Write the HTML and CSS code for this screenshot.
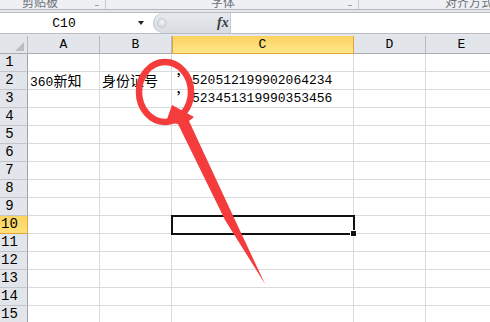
FILE: index.html
```html
<!DOCTYPE html>
<html>
<head>
<meta charset="utf-8">
<title>身份证号</title>
<link rel="stylesheet" href="styles.css">
</head>
<body>
<div class="ribbon">
	<div class="group g1"><span class="glabel">剪贴板</span><span class="launcher"></span></div>
	<div class="group g2"><span class="glabel">字体</span><span class="launcher"></span></div>
	<div class="group g3"><span class="glabel">对齐方式</span></div>
</div>
<div class="gap"></div>
<div class="formulaBar">
	<div class="nameBox"><span class="name">C10</span><span class="drop"></span></div>
	<div class="fxArea"><span class="knob"></span><span class="fx">fx</span></div>
	<div class="formulaInput"></div>
</div>
<div class="gap"></div>
<div class="sheet">
	<div class="row head"><div class="hd corner"></div><div class="hd">A</div><div class="hd">B</div><div class="hd active">C</div><div class="hd">D</div><div class="hd">E</div></div>
	<div class="row"><div class="rh">1</div><div class="c"></div><div class="c"></div><div class="c"></div><div class="c"></div><div class="c"></div></div>
	<div class="row"><div class="rh">2</div><div class="c">360<span class="cjk">新知</span></div><div class="c"><span class="cjk">身份证号</span></div><div class="c"><span class="quote">’</span>520512199902064234</div><div class="c"></div><div class="c"></div></div>
	<div class="row"><div class="rh">3</div><div class="c"></div><div class="c"></div><div class="c"><span class="quote">’</span>523451319990353456</div><div class="c"></div><div class="c"></div></div>
	<div class="row"><div class="rh">4</div><div class="c"></div><div class="c"></div><div class="c"></div><div class="c"></div><div class="c"></div></div>
	<div class="row"><div class="rh">5</div><div class="c"></div><div class="c"></div><div class="c"></div><div class="c"></div><div class="c"></div></div>
	<div class="row"><div class="rh">6</div><div class="c"></div><div class="c"></div><div class="c"></div><div class="c"></div><div class="c"></div></div>
	<div class="row"><div class="rh">7</div><div class="c"></div><div class="c"></div><div class="c"></div><div class="c"></div><div class="c"></div></div>
	<div class="row"><div class="rh">8</div><div class="c"></div><div class="c"></div><div class="c"></div><div class="c"></div><div class="c"></div></div>
	<div class="row"><div class="rh">9</div><div class="c"></div><div class="c"></div><div class="c"></div><div class="c"></div><div class="c"></div></div>
	<div class="row"><div class="rh active">10</div><div class="c"></div><div class="c"></div><div class="c selected"></div><div class="c"></div><div class="c"></div></div>
	<div class="row"><div class="rh">11</div><div class="c"></div><div class="c"></div><div class="c"></div><div class="c"></div><div class="c"></div></div>
	<div class="row"><div class="rh">12</div><div class="c"></div><div class="c"></div><div class="c"></div><div class="c"></div><div class="c"></div></div>
	<div class="row"><div class="rh">13</div><div class="c"></div><div class="c"></div><div class="c"></div><div class="c"></div><div class="c"></div></div>
	<div class="row"><div class="rh">14</div><div class="c"></div><div class="c"></div><div class="c"></div><div class="c"></div><div class="c"></div></div>
	<div class="row"><div class="rh">15</div><div class="c"></div><div class="c"></div><div class="c"></div><div class="c"></div><div class="c"></div></div>
</div>
<svg class="mark" width="490" height="322" viewBox="0 0 490 322">
	<ellipse cx="165" cy="92" rx="26" ry="30" fill="none" stroke="#f43c3c" stroke-width="6.5"/>
	<path d="M172 105 L194 117 L189 121 L235 220 L265 284 L225 220 L178 124 L166 122 Z" fill="#f43c3c"/>
</svg>
</body>
</html>
```
FILE: styles.css
```css
html, body{
	margin: 0;
	padding: 0;
	overflow: hidden;
	background: #ffffff;
}
body{
	width: 490px;
	height: 322px;
	font-family: "Liberation Mono", "Noto Sans CJK SC", monospace;
	position: relative;
}
.ribbon{
	display: flex;
	height: 9px;
	overflow: hidden;
	background: #eef0f3;
	border-bottom: 1px solid #b4b8be;
}
.group{
	position: relative;
	display: flex;
	align-items: flex-end;
	border-right: 1px solid #c6cad0;
}
.g1{ width: 105px; }
.g2{ width: 252px; }
.g3{ flex: 1; border-right: none; }
.glabel{
	font-family: "Noto Sans CJK SC", sans-serif;
	font-size: 12px;
	line-height: 16px;
	height: 16px;
	margin-bottom: -1px;
	color: #6d7077;
	flex-shrink: 0;
}
.g1 .glabel{ margin-left: 22px; }
.g2 .glabel{ margin-left: 105px; }
.g3 .glabel{ margin-left: 86px; }
.launcher{
	position: absolute;
	right: 6px;
	bottom: 3px;
	width: 4px;
	height: 1px;
	background: #9a9ea5;
}
.gap{
	height: 2px;
	background: #e4e7eb;
}
.formulaBar{
	display: flex;
	height: 20px;
	border-top: 1px solid #b9bdc3;
	border-bottom: 1px solid #b9bdc3;
	background: #ffffff;
}
.nameBox{
	width: 153px;
	display: flex;
	align-items: center;
}
.name{
	width: 128px;
	text-align: center;
	font-size: 13px;
	color: #000;
}
.drop{
	margin-left: 10px;
	width: 0;
	height: 0;
	border-left: 3px solid transparent;
	border-right: 3px solid transparent;
	border-top: 4px solid #222;
}
.fxArea{
	width: 77px;
	display: flex;
	align-items: center;
	background: linear-gradient(#e6e9ed, #d9dde2);
	border-radius: 10px 0 0 10px;
	box-shadow: inset 1px 0 0 #c3c7cd;
}
.knob{
	margin-left: 4px;
	width: 8px;
	height: 8px;
	border-radius: 50%;
	background: radial-gradient(circle at 50% 40%, #f4f5f7, #c9cdd3);
	border: 1px solid #c8ccd2;
}
.fx{
	margin-left: 50px;
	font-family: "Liberation Serif", serif;
	font-style: italic;
	font-weight: bold;
	font-size: 14px;
	color: #3a3d42;
}
.formulaInput{
	flex: 1;
	border-left: 1px solid #c6cad0;
}
.sheet{
	display: flex;
	flex-direction: column;
}
.row{
	display: grid;
	grid-template-columns: 28px 72px 72px 182px 72px 72px;
	height: 18px;
}
.row > div{
	box-sizing: border-box;
	height: 18px;
	border-right: 1px solid #d9dadc;
	border-bottom: 1px solid #d9dadc;
	font-size: 13px;
	line-height: 17px;
	white-space: nowrap;
	color: #000;
}
.hd{
	text-align: center;
	background: #e2e5e9;
	color: #2e3136;
	border-right-color: #b7bbc1 !important;
	border-bottom-color: #a9adb3 !important;
}
.corner{
	position: relative;
}
.corner::after{
	content: "";
	position: absolute;
	right: 3px;
	bottom: 2px;
	width: 0;
	height: 0;
	border-left: 9px solid transparent;
	border-bottom: 9px solid #b9bec4;
}
.hd.active{
	background: linear-gradient(#fbd25f, #ffe78c);
	border-right-color: #e3a53a !important;
	border-bottom-color: #e3a53a !important;
	box-shadow: inset 1px 0 0 #e3a53a;
}
.rh{
	text-align: center;
	padding-right: 8px;
	background: #e2e5e9;
	color: #2e3136;
	font-size: 14px !important;
	border-right-color: #9ea3a9 !important;
	border-bottom-color: #c3c7cc !important;
}
.rh.active{
	background: linear-gradient(#fbd560, #ffe07a);
	border-bottom-color: #e3a53a !important;
	border-right-color: #e3a53a !important;
}
.c{
	padding-left: 2px;
}
.c:nth-child(4){
	padding-left: 5px;
}
.cjk{
	font-family: "Noto Sans CJK SC", sans-serif;
	font-size: 14px;
	line-height: 17px;
}
.quote{
	display: inline-block;
	width: 15px;
	height: 17px;
	line-height: 14px;
	vertical-align: top;
	overflow: hidden;
	font-family: "Noto Sans CJK SC", sans-serif;
	font-size: 14px;
	font-weight: bold;
}
.selected{
	position: relative;
	outline: 2px solid #111;
	outline-offset: -1px;
	z-index: 1;
}
.selected::after{
	content: "";
	position: absolute;
	right: -4px;
	bottom: -4px;
	width: 5px;
	height: 5px;
	background: #111;
	border: 1px solid #fff;
}
.mark{
	position: absolute;
	left: 0;
	top: 0;
	z-index: 5;
	pointer-events: none;
}
```
